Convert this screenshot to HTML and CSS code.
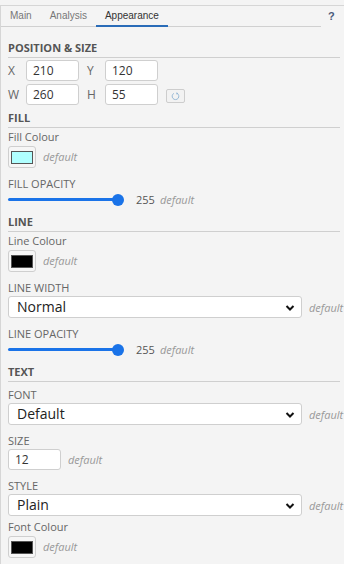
FILE: index.html
```html
<!DOCTYPE html>
<html>
<head>
<meta charset="utf-8">
<link rel="stylesheet" href="styles.css">
</head>
<body>
<div class="panel">
  <div class="tabbar">
    <div class="tabs">
      <div class="tab">Main</div>
      <div class="tab">Analysis</div>
      <div class="tab active">Appearance</div>
    </div>
    <div class="help">?</div>
  </div>
  <div class="content">
    <div class="heading first">POSITION &amp; SIZE</div>
    <div class="posrow">
      <span class="plabel">X</span><div class="num">210</div>
      <span class="plabel">Y</span><div class="num">120</div>
    </div>
    <div class="posrow">
      <span class="plabel">W</span><div class="num">260</div>
      <span class="plabel">H</span><div class="num">55</div>
      <div class="reset"><svg width="9" height="9" viewBox="0 0 10 10"><path d="M6.6 1.4 A3.7 3.7 0 1 1 3.2 1.5" fill="none" stroke="#8fb3d3" stroke-width="1"/><path d="M6.2 0.4 L8 1.8 L5.8 2.9 Z" fill="#8fb3d3"/></svg></div>
    </div>

    <div class="heading">FILL</div>
    <div class="field tight">
      <div class="label">Fill Colour</div>
      <div class="inline">
        <div class="swatch"><div class="chip cyan"></div></div>
        <span class="def">default</span>
      </div>
    </div>
    <div class="field">
      <div class="label">FILL OPACITY</div>
      <div class="inline">
        <div class="slider"><div class="track"></div><div class="thumb"></div></div>
        <span class="val">255</span><span class="def">default</span>
      </div>
    </div>

    <div class="heading">LINE</div>
    <div class="field tight">
      <div class="label">Line Colour</div>
      <div class="inline">
        <div class="swatch"><div class="chip black"></div></div>
        <span class="def">default</span>
      </div>
    </div>
    <div class="field">
      <div class="label">LINE WIDTH</div>
      <div class="inline">
        <div class="select"><span>Normal</span><svg class="chev" width="10" height="8" viewBox="0 0 10 8"><path d="M1.5 2 L5 5.5 L8.5 2" fill="none" stroke="#111" stroke-width="2"/></svg></div>
        <span class="def">default</span>
      </div>
    </div>
    <div class="field">
      <div class="label">LINE OPACITY</div>
      <div class="inline">
        <div class="slider"><div class="track"></div><div class="thumb"></div></div>
        <span class="val">255</span><span class="def">default</span>
      </div>
    </div>

    <div class="heading">TEXT</div>
    <div class="field lead">
      <div class="label">FONT</div>
      <div class="inline">
        <div class="select"><span>Default</span><svg class="chev" width="10" height="8" viewBox="0 0 10 8"><path d="M1.5 2 L5 5.5 L8.5 2" fill="none" stroke="#111" stroke-width="2"/></svg></div>
        <span class="def">default</span>
      </div>
    </div>
    <div class="field">
      <div class="label">SIZE</div>
      <div class="inline">
        <div class="num size">12</div>
        <span class="def">default</span>
      </div>
    </div>
    <div class="field">
      <div class="label">STYLE</div>
      <div class="inline">
        <div class="select"><span>Plain</span><svg class="chev" width="10" height="8" viewBox="0 0 10 8"><path d="M1.5 2 L5 5.5 L8.5 2" fill="none" stroke="#111" stroke-width="2"/></svg></div>
        <span class="def">default</span>
      </div>
    </div>
    <div class="field close">
      <div class="label">Font Colour</div>
      <div class="inline">
        <div class="swatch"><div class="chip black"></div></div>
        <span class="def">default</span>
      </div>
    </div>
  </div>
</div>
</body>
</html>
```
FILE: styles.css
```css
html, body {
  margin: 0;
  padding: 0;
  background: #f4f4f4;
}
body {
  width: 344px;
  height: 564px;
  overflow: hidden;
  font-family: "Open Sans", "Noto Sans", sans-serif;
  color: #555;
}
.panel {
  margin-top: 5px;
  border-top: 1px solid #d6d6d6;
  border-left: 1px solid #d6d6d6;
  height: 558px;
}
.tabbar {
  display: flex;
  align-items: flex-start;
}
.tabs {
  display: flex;
  width: 320px;
  border-bottom: 1px solid #d0d0d0;
  height: 20px;
}
.tab {
  font-family: "Liberation Sans", Arial, sans-serif;
  font-size: 10px;
  color: #777;
  padding: 0 9px;
  line-height: 19px;
  height: 19px;
}
.tab.active {
  color: #333;
  border-bottom: 2px solid #2a6cb8;
}
.help {
  font-family: "Liberation Sans", Arial, sans-serif;
  font-size: 11px;
  font-weight: bold;
  color: #4a5a7a;
  margin-left: 7px;
  line-height: 19px;
  padding-top: 1px;
}
.content {
  padding: 0 4px 0 7px;
}
.heading {
  font-size: 11px;
  font-weight: bold;
  line-height: 15px;
  color: #555;
  padding-bottom: 2px;
  border-bottom: 1px solid #cfcfcf;
  margin-top: 7px;
}
.heading.first {
  margin-top: 13px;
}
.posrow + .heading {
  margin-top: 5px;
}
.posrow {
  display: flex;
  align-items: center;
  height: 21px;
  margin-top: 3px;
}
.heading + .posrow {
  margin-top: 2px;
}
.plabel {
  font-size: 12px;
  color: #666;
  width: 18px;
}
.plabel + .num {
  margin-right: 8px;
}
.num {
  box-sizing: border-box;
  width: 53px;
  height: 21px;
  background: #fff;
  border: 1px solid #cfcfcf;
  border-radius: 3px;
  font-size: 12px;
  line-height: 19px;
  color: #333;
  padding-left: 6px;
  flex-shrink: 0;
}
.reset {
  box-sizing: border-box;
  width: 19px;
  height: 14px;
  border: 1px solid #cdcdcd;
  border-radius: 2px;
  background: #f2f2f2;
  display: flex;
  align-items: center;
  justify-content: center;
  margin-top: 3px;
}
.field {
  margin-top: 8px;
}
.field.tight {
  margin-top: 1px;
}
.field.lead {
  margin-top: 5px;
}
.field.close {
  margin-top: 3px;
}
.label {
  font-size: 11px;
  line-height: 15px;
  color: #666;
}
.inline {
  display: flex;
  align-items: center;
  margin-top: 1px;
}
.swatch {
  box-sizing: border-box;
  width: 28px;
  height: 22px;
  border: 1px solid #cfcfcf;
  border-radius: 3px;
  background: #f6f6f6;
  display: flex;
  align-items: center;
  justify-content: center;
  margin-top: 1px;
  flex-shrink: 0;
}
.chip {
  box-sizing: border-box;
  width: 22px;
  height: 13px;
  border: 1px solid #555;
}
.chip.cyan { background: #b0ffff; }
.chip.black { background: #000; }
.def {
  font-size: 11px;
  font-style: italic;
  color: #999;
  margin-left: 7px;
  white-space: nowrap;
}
.val {
  font-size: 11px;
  color: #555;
  margin-left: 12px;
}
.val + .def {
  margin-left: 5px;
}
.slider {
  display: flex;
  align-items: center;
  width: 116px;
  height: 14px;
  flex-shrink: 0;
}
.track {
  flex: 1;
  height: 3px;
  border-radius: 2px;
  background: #1a73e8;
}
.thumb {
  width: 12px;
  height: 12px;
  border-radius: 50%;
  background: #1a73e8;
  margin-left: -3px;
}
.select {
  position: relative;
  box-sizing: border-box;
  width: 294px;
  height: 22px;
  flex-shrink: 0;
  background: #fff;
  border: 1px solid #cfcfcf;
  border-radius: 3px;
  font-size: 14px;
  line-height: 20px;
  color: #222;
  padding-left: 8px;
}
.chev {
  position: absolute;
  right: 6px;
  top: 7px;
}
```
